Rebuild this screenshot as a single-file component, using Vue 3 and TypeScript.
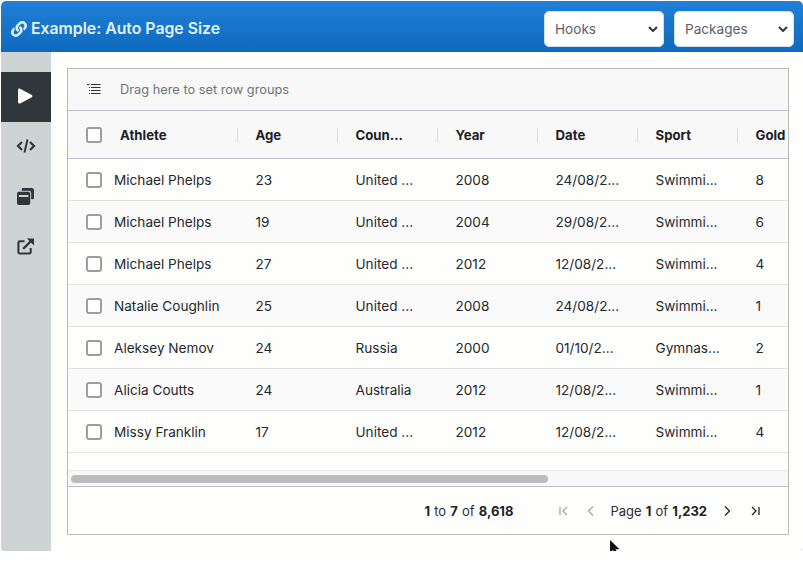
<script setup lang="ts">
interface Row {
  athlete: string
  age: number
  country: string
  year: number
  date: string
  sport: string
  gold: number
}

const columns = ['Age', 'Coun...', 'Year', 'Date', 'Sport', 'Gold']

const rows: Row[] = [
  { athlete: 'Michael Phelps', age: 23, country: 'United ...', year: 2008, date: '24/08/2...', sport: 'Swimmi...', gold: 8 },
  { athlete: 'Michael Phelps', age: 19, country: 'United ...', year: 2004, date: '29/08/2...', sport: 'Swimmi...', gold: 6 },
  { athlete: 'Michael Phelps', age: 27, country: 'United ...', year: 2012, date: '12/08/2...', sport: 'Swimmi...', gold: 4 },
  { athlete: 'Natalie Coughlin', age: 25, country: 'United ...', year: 2008, date: '24/08/2...', sport: 'Swimmi...', gold: 1 },
  { athlete: 'Aleksey Nemov', age: 24, country: 'Russia', year: 2000, date: '01/10/2...', sport: 'Gymnas...', gold: 2 },
  { athlete: 'Alicia Coutts', age: 24, country: 'Australia', year: 2012, date: '12/08/2...', sport: 'Swimmi...', gold: 1 },
  { athlete: 'Missy Franklin', age: 17, country: 'United ...', year: 2012, date: '12/08/2...', sport: 'Swimmi...', gold: 4 }
]

const cellsOf = (row: Row) => [row.age, row.country, row.year, row.date, row.sport, row.gold]
</script>

<template>
  <div class="frame">
    <header class="topbar">
      <div class="title">
        <svg class="link-icon" viewBox="0 0 512 512">
          <path fill="currentColor" d="M326.6 185.400c59.700 59.800 58.900 155.700.4 214.600l-67.200 67.200c-59.300 59.300-155.700 59.300-215 0-59.300-59.300-59.300-155.700 0-215l37.100-37.100c9.800-9.800 26.800-3.300 27.300 10.600.6 17.700 3.800 35.500 9.700 52.700 2 5.800.6 12.300-3.800 16.600l-13.100 13.100c-28 28-28.900 73.700-1.200 102 28 28.600 74.100 28.700 102.300.5l67.200-67.200c28.200-28.200 28.100-73.800 0-101.800-3.700-3.700-7.400-6.600-10.300-8.600a16 16 0 0 1-6.900-12.600c-.4-10.600 3.300-21.500 11.700-29.800l21.100-21.100c5.500-5.500 14.200-6.200 20.600-1.700a152.500 152.500 0 0 1 20.500 17.200zM467.500 44.400c-59.300-59.300-155.700-59.300-215 0l-67.200 67.200c-58.500 58.900-59.300 154.800.4 214.600a152.500 152.500 0 0 0 20.500 17.200c6.400 4.500 15.100 3.800 20.600-1.700l21.100-21.100c8.400-8.400 12.100-19.200 11.700-29.800a16 16 0 0 0-6.900-12.600c-2.900-2-6.600-4.900-10.300-8.600-28.100-28-28.200-73.600 0-101.800l67.200-67.200c28.200-28.200 74.300-28.100 102.300.5 27.700 28.300 26.800 74-1.200 102l-13.100 13.100c-4.400 4.400-5.800 10.800-3.800 16.600 5.900 17.200 9.100 35 9.700 52.700.5 13.900 17.500 20.400 27.300 10.600l37.100-37.100c59.300-59.300 59.300-155.700-.4-215z" />
        </svg>
        <span>Example: Auto Page Size</span>
      </div>
      <div class="selects">
        <div class="select">
          <span>Hooks</span>
          <svg class="chevron" viewBox="0 0 10 6"><path d="M1 1l4 4 4-4" /></svg>
        </div>
        <div class="select">
          <span>Packages</span>
          <svg class="chevron" viewBox="0 0 10 6"><path d="M1 1l4 4 4-4" /></svg>
        </div>
      </div>
    </header>

    <div class="body">
      <aside class="sidebar">
        <div class="tab active">
          <svg class="tab-icon play" viewBox="0 0 16 16"><path d="M1 1.600c0-1 1-1.500 1.900-1l11 5.900c.8.500.8 1.600 0 2.100l-11 5.900c-.9.500-1.900 0-1.900-1z" fill="#fff" /></svg>
        </div>
        <div class="tab">
          <svg class="tab-icon code" viewBox="0 0 20 16">
            <path d="M6 4L2 8l4 4M14 4l4 4-4 4" fill="none" stroke="currentColor" stroke-width="2.200" />
            <path d="M11.500 1.500L8.500 14.500" fill="none" stroke="currentColor" stroke-width="2" />
          </svg>
        </div>
        <div class="tab">
          <svg class="tab-icon" viewBox="0 0 18 18">
            <path fill="currentColor" d="M5 1.500A1.500 1.500 0 0 1 6.500 0h9A2.500 2.500 0 0 1 18 2.500v8a1.500 1.500 0 0 1-1.500 1.500H15V5.500A2.500 2.500 0 0 0 12.500 3H5z" />
            <path fill="currentColor" fill-rule="evenodd" d="M2 4h10a2 2 0 0 1 2 2v10a2 2 0 0 1-2 2H2a2 2 0 0 1-2-2V6a2 2 0 0 1 2-2zm0 3.500v2h10v-2z" />
          </svg>
        </div>
        <div class="tab">
          <svg class="tab-icon" viewBox="0 0 18 18">
            <path d="M8 3.500H3A1.500 1.500 0 0 0 1.500 5v10A1.500 1.500 0 0 0 3 16.500h10a1.500 1.500 0 0 0 1.500-1.500v-4.500" fill="none" stroke="currentColor" stroke-width="2.200" />
            <path d="M6.500 11.500L15 3" fill="none" stroke="currentColor" stroke-width="2.400" />
            <path d="M10.500 0.500H18V8z" fill="currentColor" />
          </svg>
        </div>
      </aside>

      <main class="content">
        <div class="grid">
          <div class="group-panel">
            <svg class="group-icon" viewBox="0 0 14 11">
              <path d="M0 .5h2.500M4 .5h9.500M4 3.500h9.500M4 6.500h9.500M4 9.500h9.500M2 3.500h1M2 6.500h1M2 9.500h1" fill="none" stroke="#2a3036" stroke-width="1" />
            </svg>
            <span>Drag here to set row groups</span>
          </div>

          <div class="viewport">
            <div class="head-row">
              <div class="athlete-cell head-first">
                <span class="checkbox"></span>
                <span class="head-label">Athlete</span>
              </div>
              <div v-for="col in columns" :key="col" class="cell head-cell">{{ col }}</div>
            </div>
            <div v-for="(row, i) in rows" :key="i" class="row" :class="{ odd: i % 2 === 1 }">
              <div class="athlete-cell">
                <span class="checkbox"></span>
                <span class="row-label">{{ row.athlete }}</span>
              </div>
              <div v-for="(val, j) in cellsOf(row)" :key="j" class="cell">{{ val }}</div>
            </div>
            <div class="filler"></div>
            <div class="scrollbar"><div class="thumb"></div></div>
          </div>

          <footer class="paging">
            <span class="summary"><b>1</b> to <b>7</b> of <b>8,618</b></span>
            <svg class="page-btn disabled first" viewBox="0 0 12 12"><path d="M2 2v8M9 2L5 6l4 4" /></svg>
            <svg class="page-btn disabled prev" viewBox="0 0 12 12"><path d="M8 1.500L3.500 6 8 10.500" /></svg>
            <span class="page-text">Page <b>1</b> of <b>1,232</b></span>
            <svg class="page-btn next" viewBox="0 0 12 12"><path d="M4 1.500L8.500 6 4 10.500" /></svg>
            <svg class="page-btn last" viewBox="0 0 12 12"><path d="M10 2v8M3 2l4 4-4 4" /></svg>
          </footer>
        </div>
      </main>
    </div>

    <svg class="cursor" viewBox="0 0 12 18">
      <path d="M1 1v12.500l3-2.500 2.200 5.500 2.600-1.100-2.200-5.200H10.500z" fill="#111" />
    </svg>
  </div>
</template>

<style>
html, body {
  margin: 0;
  background: #fff;
}
</style>

<style scoped>
.frame {
  position: relative;
  width: 802px;
  height: 550px;
  margin: 1px 0 0 1px;
  overflow: hidden;
  border-radius: 5px 5px 4px 4px;
  box-shadow: 0 1px 0 #e2e4e4;
  font-family: Inter, "Liberation Sans", sans-serif;
  color: #1f2429;
  background: #fefefd;
}

.topbar {
  height: 51px;
  display: flex;
  align-items: center;
  justify-content: space-between;
  padding: 4px 9px 0 10px;
  box-sizing: border-box;
  background: linear-gradient(#1f80d8, #0f6abd);
  color: #e2f1fd;
}

.title {
  display: flex;
  align-items: center;
  gap: 4px;
  font-size: 15.800px;
  font-weight: 600;
}

.link-icon {
  width: 16px;
  height: 16px;
}

.selects {
  display: flex;
  gap: 10px;
}

.select {
  width: 120px;
  height: 36px;
  box-sizing: border-box;
  display: flex;
  align-items: center;
  justify-content: space-between;
  padding: 0 5px 0 10px;
  background: #fff;
  border: 1px solid #cfe2f3;
  border-radius: 5px;
  font-size: 13.600px;
  color: #5b6168;
}

.chevron {
  width: 10px;
  height: 6px;
  fill: none;
  stroke: #33383d;
  stroke-width: 2;
}

.body {
  display: flex;
  height: 499px;
}

.sidebar {
  width: 50px;
  flex: none;
  padding-top: 20px;
  box-sizing: border-box;
  background: #ced3d3;
  color: #30363b;
}

.tab {
  height: 50px;
  box-sizing: border-box;
  padding: 0 1px 2px 0;
  display: flex;
  align-items: center;
  justify-content: center;
}

.tab.active {
  background: #30373c;
}

.tab-icon {
  width: 17px;
  height: 17px;
}

.tab-icon.code {
  width: 20px;
  height: 16px;
}

.content {
  flex: 1;
  padding: 16px 14px 16px 16px;
  min-width: 0;
}

.grid {
  height: 467px;
  box-sizing: border-box;
  display: flex;
  flex-direction: column;
  border: 1px solid #bcbcbc;
  background: #fefefd;
}

.group-panel {
  height: 42px;
  flex: none;
  display: flex;
  align-items: center;
  padding-left: 19px;
  gap: 19px;
  box-sizing: border-box;
  background: #f8f8f8;
  border-bottom: 1px solid #bdbdcb;
  font-size: 12.800px;
  color: #6f7479;
}

.group-icon {
  width: 14px;
  height: 11px;
  flex: none;
}

.viewport {
  flex: 1;
  min-height: 0;
  display: flex;
  flex-direction: column;
  overflow: hidden;
}

.head-row,
.row {
  display: grid;
  grid-template-columns: 169.500px repeat(6, 100px);
  flex: none;
  white-space: nowrap;
}

.head-row {
  height: 48px;
  box-sizing: border-box;
  background: #f8f8f8;
  border-bottom: 1px solid #bdbdcb;
  color: #1c2126;
}

.row {
  height: 42px;
  box-sizing: border-box;
  background: #fefefd;
  border-bottom: 1px solid #e2e2e2;
  color: #24292e;
}

.row.odd {
  background: #fafafa;
}

.athlete-cell,
.cell {
  display: flex;
  align-items: center;
  padding-left: 18px;
  overflow: hidden;
  position: relative;
  font-size: 13.600px;
}

.head-row .cell,
.head-first {
  font-size: 13.200px;
  font-weight: 700;
  overflow: visible;
}

.head-cell::before {
  content: "";
  position: absolute;
  height: 14px;
  width: 1px;
  background: #dcdcdc;
  top: 17px;
  left: -1px;
}

.checkbox {
  width: 16px;
  height: 16px;
  flex: none;
  box-sizing: border-box;
  border: 2px solid #9d9d9d;
  border-radius: 3px;
  background: #fff;
}

.head-label {
  margin-left: 18px;
}

.row-label {
  margin-left: 12px;
}

.filler {
  flex: 1;
}

.scrollbar {
  height: 15px;
  flex: none;
  background: #f8f8f8;
  border-top: 1px solid #e6e6e6;
  padding: 0 3px;
  display: flex;
  align-items: center;
}

.thumb {
  width: 477px;
  height: 8px;
  border-radius: 4px;
  background: #bcbcbc;
}

.paging {
  height: 48px;
  flex: none;
  box-sizing: border-box;
  border-top: 1px solid #bdbdcb;
  display: flex;
  align-items: center;
  justify-content: flex-end;
  padding-right: 27px;
  font-size: 13px;
  word-spacing: 0.500px;
  color: #2b3035;
}

.paging b {
  font-weight: 700;
  color: #1c2126;
}

.summary {
  margin-right: 45px;
}

.page-btn {
  width: 12px;
  height: 12px;
  fill: none;
  stroke: #1f2429;
  stroke-width: 1.300;
  flex: none;
}

.page-btn.disabled {
  stroke: #a4a8ac;
}

.prev {
  margin-left: 15px;
}

.page-text {
  margin: 0 14px 0 13px;
}

.last {
  margin-left: 16px;
}

.cursor {
  position: absolute;
  left: 608px;
  top: 538px;
  width: 12px;
  height: 18px;
}
</style>
